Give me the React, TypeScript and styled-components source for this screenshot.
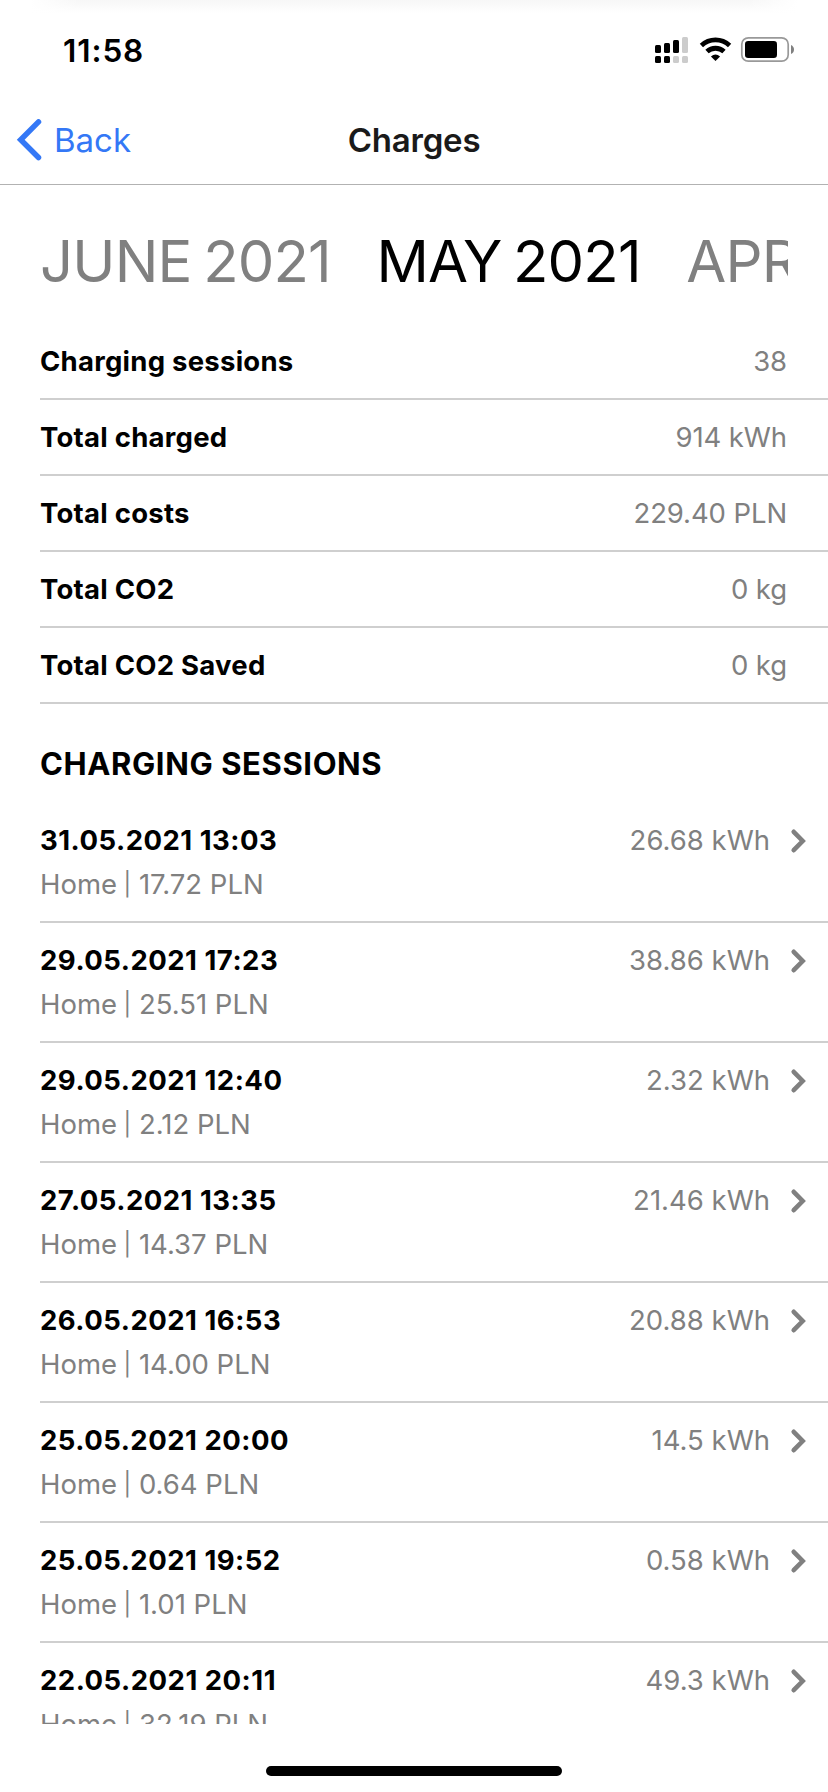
import React from "react";
import styled, { createGlobalStyle } from "styled-components";

const GlobalStyle = createGlobalStyle`
  * { box-sizing: border-box; }
  body {
    margin: 0;
    background: #fff;
    font-family: Inter, "Liberation Sans", sans-serif;
    color: #000;
  }
`;

const Screen = styled.div`
  display: flex;
  flex-direction: column;
  width: 828px;
  height: 1792px;
  overflow: hidden;
  background: #fff;
`;

const StatusBar = styled.header`
  display: flex;
  align-items: center;
  justify-content: space-between;
  flex: none;
  height: 96px;
  padding: 4px 34px 0 63px;
  background:
    linear-gradient(90deg, #fff 30px, transparent 80px, transparent 748px, #fff 798px) 0 0 / 100% 13px no-repeat,
    linear-gradient(#f7f7f7, #fff) 0 0 / 100% 13px no-repeat;
`;

const Clock = styled.time`
  font-size: 31.5px;
  font-weight: 600;
  letter-spacing: 0.9px;
`;

const StatusIcons = styled.svg`
  display: block;
  width: 140px;
  height: 28px;
`;

const NavBar = styled.nav`
  display: grid;
  grid-template-columns: 1fr auto 1fr;
  align-items: center;
  flex: none;
  height: 89px;
  border-bottom: 1px solid #b2b2b2;
`;

const BackButton = styled.button`
  display: flex;
  align-items: center;
  gap: 11px;
  padding: 0 0 0 16px;
  border: 0;
  background: none;
  color: #3478f6;
  font: 400 33px/40px Inter, sans-serif;
  letter-spacing: 0;
`;

const Title = styled.h1`
  margin: 0;
  color: #1a1a1a;
  font-size: 33px;
  font-weight: 600;
  line-height: 40px;
  letter-spacing: -0.2px;
`;

const Months = styled.div`
  display: flex;
  gap: 45.5px;
  flex: none;
  height: 139px;
  margin: 0 40px;
  padding-top: 46px;
  overflow: hidden;
`;

const Month = styled.span<{ $active?: boolean }>`
  flex: none;
  color: ${(p) => (p.$active ? "#000" : "#808080")};
  font-size: 58px;
  line-height: 60px;
  letter-spacing: -0.8px;
  word-spacing: -4px;
  white-space: nowrap;
`;

const Stats = styled.dl`
  flex: none;
  margin: 0 0 0 40px;
`;

const Stat = styled.div`
  display: flex;
  align-items: center;
  justify-content: space-between;
  height: 76px;
  padding-right: 41px;
  border-bottom: 2px solid #cfcfcf;
`;

const Label = styled.dt`
  font-size: 27.5px;
  font-weight: 700;
  letter-spacing: 0.25px;
`;

const Value = styled.dd`
  margin: 0;
  color: #808080;
  font-size: 27.5px;
  letter-spacing: -0.1px;
`;

const SectionTitle = styled.h2`
  flex: none;
  height: 99px;
  margin: 0 0 0 40px;
  padding-top: 21px;
  font-size: 31px;
  font-weight: 700;
  line-height: 78px;
  letter-spacing: 0.6px;
`;

const Sessions = styled.ul`
  flex: none;
  height: 921px;
  margin: 0 0 0 40px;
  padding: 0;
  overflow: hidden;
  list-style: none;
`;

const Session = styled.li`
  display: flex;
  align-items: flex-start;
  height: 120px;
  padding: 15px 22px 15px 0;
  border-bottom: 2px solid #cfcfcf;
  font-size: 27.5px;
  line-height: 44px;
`;

const SessionInfo = styled.div`
  flex: 1;
`;

const SessionDate = styled.div`
  font-weight: 700;
  letter-spacing: 0.5px;
`;

const SessionCost = styled.div`
  display: flex;
  height: 44px;
  color: #808080;
  white-space: pre;
`;

const Divider = styled.span`
  padding: 0 7.7px 0 6.5px;
  font-size: 23px;
`;

const Energy = styled.span`
  color: #808080;
`;

const Disclosure = styled.svg`
  flex: none;
  width: 16px;
  height: 26px;
  margin: 10px 0 0 20px;
`;

const HomeArea = styled.footer`
  display: flex;
  align-items: flex-end;
  justify-content: center;
  flex: 1;
  padding-bottom: 16px;
`;

const HomeIndicator = styled.div`
  width: 296px;
  height: 10px;
  border-radius: 5px;
  background: #000;
`;

const stats = [
  { label: "Charging sessions", value: "38" },
  { label: "Total charged", value: "914 kWh" },
  { label: "Total costs", value: "229.40 PLN" },
  { label: "Total CO2", value: "0 kg" },
  { label: "Total CO2 Saved", value: "0 kg" },
];

const sessions = [
  { date: "31.05.2021 13:03", cost: "17.72", energy: "26.68" },
  { date: "29.05.2021 17:23", cost: "25.51", energy: "38.86" },
  { date: "29.05.2021 12:40", cost: "2.12", energy: "2.32" },
  { date: "27.05.2021 13:35", cost: "14.37", energy: "21.46" },
  { date: "26.05.2021 16:53", cost: "14.00", energy: "20.88" },
  { date: "25.05.2021 20:00", cost: "0.64", energy: "14.5" },
  { date: "25.05.2021 19:52", cost: "1.01", energy: "0.58" },
  { date: "22.05.2021 20:11", cost: "32.19", energy: "49.3" },
];

export default function App() {
  return (
    <Screen>
      <GlobalStyle />
      <StatusBar>
        <Clock>11:58</Clock>
        <StatusIcons viewBox="654 36 140 28">
          <rect x="655" y="45" width="6" height="8" rx="1.5" />
          <rect x="664" y="43" width="6" height="10" rx="1.5" />
          <rect x="673" y="40" width="6" height="13" rx="1.5" />
          <rect x="682" y="37" width="6" height="16" rx="1.5" fill="#ccc" />
          <rect x="655" y="56" width="6" height="7" rx="1.5" />
          <rect x="664" y="56" width="6" height="7" rx="1.5" />
          <rect x="673" y="56" width="6" height="7" rx="1.5" fill="#ccc" />
          <rect x="682" y="56" width="6" height="7" rx="1.5" fill="#ccc" />
          <g fill="none" stroke="#000" strokeWidth="4.8">
            <path d="M701.4 45.4 A20.9 20.9 0 0 1 729.6 45.4" />
            <path d="M707 51.6 A12.5 12.5 0 0 1 724 51.6" />
          </g>
          <path d="M715.5 61 L710.9 56.5 Q715.5 52.6 720.1 56.5 Z" />
          <rect x="741.8" y="37.8" width="46.4" height="23.4" rx="6.5" fill="none" stroke="#999" strokeWidth="1.7" />
          <rect x="745" y="41" width="32" height="17" rx="3.2" />
          <path d="M791 45 Q794 46.5 794 49.5 T791 54 Z" fill="#808080" />
        </StatusIcons>
      </StatusBar>
      <NavBar>
        <BackButton>
          <svg width="27" height="42" viewBox="0 0 27 42">
            <path d="M22.5 2.9 L4.7 20.7 L22.5 38.5" fill="none" stroke="#3478f6" strokeWidth="5.5" strokeLinecap="round" />
          </svg>
          Back
        </BackButton>
        <Title>Charges</Title>
      </NavBar>
      <Months>
        <Month>JUNE 2021</Month>
        <Month $active>MAY 2021</Month>
        <Month>APRIL 2021</Month>
      </Months>
      <Stats>
        {stats.map((s) => (
          <Stat key={s.label}>
            <Label>{s.label}</Label>
            <Value>{s.value}</Value>
          </Stat>
        ))}
      </Stats>
      <SectionTitle>CHARGING SESSIONS</SectionTitle>
      <Sessions>
        {sessions.map((s) => (
          <Session key={s.date}>
            <SessionInfo>
              <SessionDate>{s.date}</SessionDate>
              <SessionCost>
                <span>Home</span>
                <Divider>|</Divider>
                <span>{s.cost} PLN</span>
              </SessionCost>
            </SessionInfo>
            <Energy>{s.energy} kWh</Energy>
            <Disclosure viewBox="0 0 16 26">
              <path d="M3.7 3.8 L12.7 13 L3.7 22.2" fill="none" stroke="#808080" strokeWidth="4.6" strokeLinecap="round" />
            </Disclosure>
          </Session>
        ))}
      </Sessions>
      <HomeArea>
        <HomeIndicator />
      </HomeArea>
    </Screen>
  );
}
